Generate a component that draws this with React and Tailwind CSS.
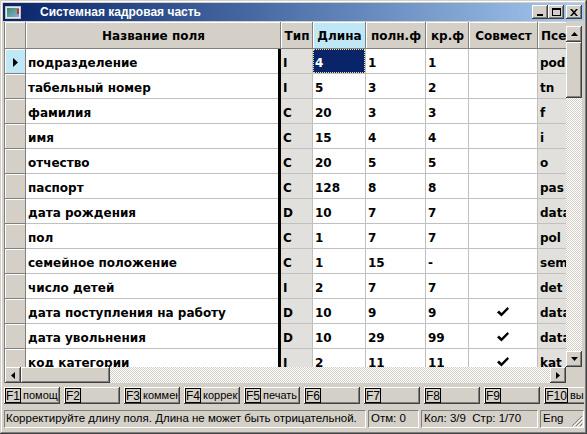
import React from "react";

const rows = [
  ["подразделение", "I", "4", "1", "1", false, "pod"],
  ["табельный номер", "I", "5", "3", "2", false, "tn"],
  ["фамилия", "C", "20", "3", "3", false, "f"],
  ["имя", "C", "15", "4", "4", false, "i"],
  ["отчество", "C", "20", "5", "5", false, "o"],
  ["паспорт", "C", "128", "8", "8", false, "pas"],
  ["дата рождения", "D", "10", "7", "7", false, "data"],
  ["пол", "C", "1", "7", "7", false, "pol"],
  ["семейное положение", "C", "1", "15", "-", false, "sem"],
  ["число детей", "I", "2", "7", "7", false, "det"],
  ["дата поступления на работу", "D", "10", "9", "9", true, "data"],
  ["дата увольнения", "D", "10", "29", "99", true, "data"],
  ["код категории", "I", "2", "11", "11", true, "kat"],
];

const raised =
  "shadow-[inset_-1px_-1px_#404040,inset_1px_1px_#ffffff,inset_-2px_-2px_#808080]";
const raisedSoft = "shadow-[inset_-1px_-1px_#808080,inset_1px_1px_#ffffff]";
const checker =
  "bg-[image:repeating-conic-gradient(#ffffff_0%_25%,#d4d0c8_0%_50%)] bg-[length:2px_2px]";

function Check() {
  return (
    <svg width="12" height="10" viewBox="0 0 12 10">
      <path d="M0 5.5 L2 3.5 L4.5 6 L10.5 0 L12 1.8 L4.5 9.5 Z" fill="#000" />
    </svg>
  );
}

function Arrow({ dir }) {
  const paths = {
    up: "M3.5 0 L7 4 L0 4 Z",
    down: "M0 0 L7 0 L3.5 4 Z",
    left: "M4 0 L4 7 L0 3.5 Z",
    right: "M0 0 L4 3.5 L0 7 Z",
  };
  const vert = dir === "up" || dir === "down";
  return (
    <svg width={vert ? 7 : 4} height={vert ? 4 : 7} viewBox={vert ? "0 0 7 4" : "0 0 4 7"}>
      <path d={paths[dir]} fill="#000" />
    </svg>
  );
}

function HeaderCell({ w, children, active }) {
  return (
    <div
      className={`${w} h-full shrink-0 flex items-center justify-center overflow-hidden whitespace-nowrap ${raisedSoft} ${
        active ? "bg-[#bfe7f6]" : "bg-[#d4d0c8]"
      }`}
    >
      {children}
    </div>
  );
}

function Cell({ w, children, gray, center, sel }) {
  return (
    <div
      className={`${w} h-full shrink-0 border-r border-b border-[#c0c0c0] flex items-center overflow-hidden whitespace-nowrap ${
        center ? "justify-center pt-[2px]" : "pl-[2px] pt-[3px]"
      } ${gray ? "bg-[#e2e0dc]" : "bg-white"} ${sel ? "!p-0" : ""}`}
    >
      {sel ? (
        <div className="w-full h-full bg-[#0a246a] text-white border border-dotted border-[#e8e8a0] flex items-center pl-[1px] pt-[3px]">
          {children}
        </div>
      ) : (
        children
      )}
    </div>
  );
}

function FKey({ k, label, wide }) {
  return (
    <div className={`w-[56px] h-[17px] shrink-0 bg-[#d4d0c8] ${raised} flex items-center overflow-hidden whitespace-nowrap`}>
      <div
        className={`ml-[1px] h-[15px] ${wide ? "w-[23px]" : "w-[16px]"} shrink-0 border border-black flex items-center justify-center text-[12px] leading-none`}
      >
        {k}
      </div>
      <span className="ml-[2px] mr-[2px] flex-1 min-w-0 overflow-hidden text-[11px] leading-none">{label}</span>
    </div>
  );
}

export default function App() {
  return (
    <div
      className="w-[587px] h-[434px] bg-[#d4d0c8] flex flex-col p-[3px] shadow-[inset_-1px_-1px_#404040,inset_1px_1px_#d4d0c8,inset_-2px_-2px_#808080,inset_2px_2px_#ffffff] overflow-hidden text-black"
      style={{ fontFamily: '"Liberation Sans", Arial, sans-serif' }}
    >
      {/* title bar */}
      <div className="h-[18px] shrink-0 bg-linear-to-r from-[#0a246a] to-[#a6caf0] flex items-center pr-[2px]">
        <div className="ml-[2px] w-[16px] h-[13px] border border-[#c0c0c0] bg-[#e8e8e8] flex p-[1px] relative">
          <div className="flex-1 bg-linear-to-br from-[#3a8a6a] to-[#8ab0d8]" />
          <div className="absolute right-[1px] top-[2px] w-[2px] h-[5px] bg-[#d03030]" />
        </div>
        <span className="ml-[19px] text-white font-bold text-[12px] leading-none">
          Системная кадровая часть
        </span>
        <div className="flex-1" />
        <div className={`w-[16px] h-[14px] bg-[#d4d0c8] ${raised} flex items-end justify-center pb-[3px]`}>
          <div className="w-[6px] h-[2px] bg-black" />
        </div>
        <div className={`w-[16px] h-[14px] bg-[#d4d0c8] ${raised} flex items-center justify-center`}>
          <div className="w-[9px] h-[8px] border border-black border-t-2" />
        </div>
        <div className={`ml-[2px] w-[16px] h-[14px] bg-[#d4d0c8] ${raised} flex items-center justify-center`}>
          <svg width="8" height="7" viewBox="0 0 8 7">
            <path d="M0 0 L2 0 L4 2.3 L6 0 L8 0 L5 3.5 L8 7 L6 7 L4 4.7 L2 7 L0 7 L3 3.5 Z" fill="#000" />
          </svg>
        </div>
      </div>

      {/* grid area */}
      <div className="mt-[1px] ml-[1px] h-[361px] shrink-0 flex">
        <div className="w-[562px] flex flex-col border-l border-[#808080]">
          <div
            className="flex-1 overflow-hidden text-[12px] font-bold"
            style={{ fontFamily: '"DejaVu Sans", Verdana, sans-serif' }}
          >
            {/* header */}
            <div className="h-[27px] flex">
              <HeaderCell w="w-[21px]" />
              <HeaderCell w="w-[255px]">Название поля</HeaderCell>
              <HeaderCell w="w-[32px]">Тип</HeaderCell>
              <HeaderCell w="w-[53px]" active>
                Длина
              </HeaderCell>
              <HeaderCell w="w-[60px]">полн.ф</HeaderCell>
              <HeaderCell w="w-[43px]">кр.ф</HeaderCell>
              <HeaderCell w="w-[69px]">Совмест</HeaderCell>
              <div className={`w-[60px] h-full shrink-0 bg-[#d4d0c8] ${raisedSoft} flex items-center pl-[3px] overflow-hidden whitespace-nowrap`}>
                Псевдоним
              </div>
            </div>
            {rows.map((r, i) => (
              <div key={i} className="h-[25px] flex">
                <div
                  className={`w-[21px] h-full shrink-0 flex items-center justify-center pt-[1px] ${raisedSoft} ${
                    i === 0 ? "bg-[#bfe7f6]" : "bg-[#d4d0c8]"
                  }`}
                >
                  {i === 0 && (
                    <svg width="5" height="9" viewBox="0 0 5 9">
                      <path d="M0 0 L5 4.5 L0 9 Z" fill="#000" />
                    </svg>
                  )}
                </div>
                <div className="w-[252px] h-full shrink-0 border-b border-[#c0c0c0] bg-white flex items-center pl-[2px] pt-[3px] overflow-hidden whitespace-nowrap">
                  {r[0]}
                </div>
                <div className="w-[3px] h-full shrink-0 bg-black" />
                <Cell w="w-[32px]" gray>
                  {r[1]}
                </Cell>
                <Cell w="w-[53px]" sel={i === 0}>
                  {r[2]}
                </Cell>
                <Cell w="w-[60px]">{r[3]}</Cell>
                <Cell w="w-[43px]">{r[4]}</Cell>
                <Cell w="w-[69px]" center>
                  {r[5] ? <Check /> : null}
                </Cell>
                <Cell w="w-[60px]" gray>
                  {r[6]}
                </Cell>
              </div>
            ))}
          </div>
          {/* horizontal scrollbar */}
          <div className={`h-[16px] shrink-0 flex ${checker}`}>
            <div className={`w-[16px] h-full bg-[#d4d0c8] ${raised} flex items-center justify-center`}>
              <Arrow dir="left" />
            </div>
            <div className={`w-[89px] h-full bg-[#d4d0c8] ${raised}`} />
            <div className="flex-1" />
            <div className={`w-[16px] h-full bg-[#d4d0c8] ${raised} flex items-center justify-center`}>
              <Arrow dir="right" />
            </div>
          </div>
        </div>
        {/* vertical scrollbar */}
        <div className="w-[16px] flex flex-col">
          <div className="h-[4px] shrink-0" />
          <div className={`flex-1 flex flex-col ${checker}`}>
            <div className={`h-[16px] shrink-0 bg-[#d4d0c8] ${raised} flex items-center justify-center`}>
              <Arrow dir="up" />
            </div>
            <div className={`h-[56px] shrink-0 bg-[#d4d0c8] ${raised}`} />
            <div className="flex-1" />
            <div className={`h-[16px] shrink-0 bg-[#d4d0c8] ${raised} flex items-center justify-center`}>
              <Arrow dir="down" />
            </div>
          </div>
          <div className="h-[16px] shrink-0 bg-[#d4d0c8]" />
        </div>
      </div>

      {/* function keys */}
      <div className="mt-[4px] ml-[1px] h-[17px] shrink-0 flex gap-[4px] overflow-hidden">
        <FKey k="F1" label="помощь" />
        <FKey k="F2" label="" />
        <FKey k="F3" label="комментарий" />
        <FKey k="F4" label="корректировка" />
        <FKey k="F5" label="печать" />
        <FKey k="F6" label="" />
        <FKey k="F7" label="" />
        <FKey k="F8" label="" />
        <FKey k="F9" label="" />
        <FKey k="F10" label="выход" wide />
      </div>

      {/* status bar */}
      <div className="mt-[6px] ml-[1px] h-[18px] shrink-0 flex gap-[2px] text-[11.5px] leading-none">
        <div className="w-[362px] h-full border border-[#808080] border-r-white border-b-white flex items-center pl-[1px] overflow-hidden whitespace-nowrap">
          Корректируйте длину поля. Длина не может быть отрицательной.
        </div>
        <div className="w-[51px] h-full border border-[#808080] border-r-white border-b-white flex items-center pl-[2px]">
          Отм: 0
        </div>
        <div className="w-[117px] h-full border border-[#808080] border-r-white border-b-white flex items-center pl-[2px] whitespace-nowrap">
          Кол: 3/9&nbsp;&nbsp;Стр: 1/70
        </div>
        <div className="flex-1 h-full border border-[#808080] border-r-white border-b-white flex items-center pl-[2px] relative">
          Eng
          <svg className="absolute right-0 bottom-0" width="12" height="12" viewBox="0 0 12 12">
            <path d="M11 1 L1 11 M11 5 L5 11 M11 9 L9 11" stroke="#808080" strokeWidth="1" />
            <path d="M12 2 L2 12 M12 6 L6 12 M12 10 L10 12" stroke="#ffffff" strokeWidth="1" />
          </svg>
        </div>
      </div>
    </div>
  );
}
